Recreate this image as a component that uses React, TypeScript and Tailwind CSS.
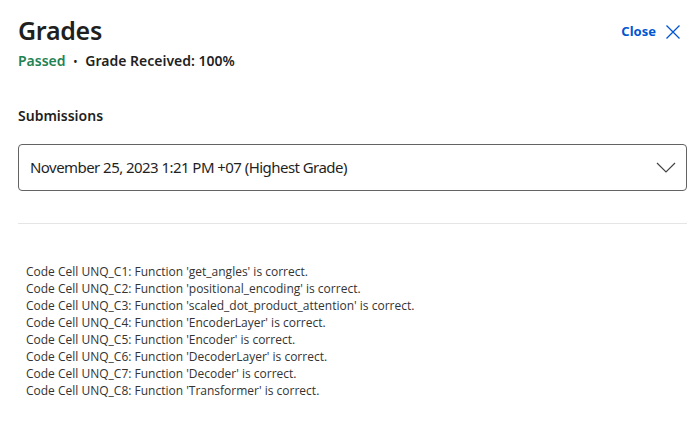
import { ChangeEvent, useState } from 'react'

const results = [
  "Code Cell UNQ_C1: Function 'get_angles' is correct.",
  "Code Cell UNQ_C2: Function 'positional_encoding' is correct.",
  "Code Cell UNQ_C3: Function 'scaled_dot_product_attention' is correct.",
  "Code Cell UNQ_C4: Function 'EncoderLayer' is correct.",
  "Code Cell UNQ_C5: Function 'Encoder' is correct.",
  "Code Cell UNQ_C6: Function 'DecoderLayer' is correct.",
  "Code Cell UNQ_C7: Function 'Decoder' is correct.",
  "Code Cell UNQ_C8: Function 'Transformer' is correct."
]

const heading = { fontFamily: '"Noto Sans", "Open Sans", sans-serif' }

export default function App() {
  const [submission, setSubmission] = useState('latest')

  return (
    <div className="w-[697px] h-[448px] bg-white text-[#1f1f1f] pl-[18px] pr-[10px] pt-[14px]" style={heading}>
      <header className="flex items-start justify-between">
        <div>
          <h1 className="text-[25px] font-semibold leading-[32px] tracking-[-0.3px]">Grades</h1>
          <div className="flex items-center mt-[5px] text-[14px] font-semibold leading-[20px]">
            <span className="text-[#1f8354]">Passed</span>
            <span className="mx-[8px] text-[10px]">•</span>
            <span>Grade Received: 100%</span>
          </div>
        </div>
        <button className="flex items-center gap-[9px] mt-[8px] mr-[6px] text-[13px] font-bold text-[#0056d2]">
          Close
          <svg width="16" height="16" viewBox="0 0 16 16" fill="none" stroke="#0056d2" strokeWidth="1.3">
            <path d="M1.5 1.5 L14.5 14.5 M14.5 1.5 L1.5 14.5" />
          </svg>
        </button>
      </header>

      <h2 className="mt-[35px] text-[14px] font-semibold leading-[20px]">Submissions</h2>

      <div className="relative mt-[18px]">
        <select
          value={submission}
          onChange={(e: ChangeEvent<HTMLSelectElement>) => setSubmission(e.target.value)}
          className="appearance-none block w-full h-[47px] rounded-[4px] border border-[#636363] bg-white pl-[11px] pr-10 text-[15px] text-[#1f1f1f] tracking-[-0.55px] outline-none"
        >
          <option value="latest">November 25, 2023 1:21 PM +07 (Highest Grade)</option>
        </select>
        <svg className="pointer-events-none absolute right-[11px] top-[18px]" width="20" height="11" viewBox="0 0 20 11" fill="none" stroke="#444" strokeWidth="1.2">
          <path d="M1 1 L10 10 L19 1" />
        </svg>
      </div>

      <hr className="mt-[32px] border-t border-[#e5e5e5]" />

      <div className="mt-[39px] pl-[8px] text-[12px] leading-[17px] text-[#333]" style={{ fontFamily: '"Open Sans", sans-serif' }}>
        {results.map((line) => (
          <div key={line}>{line}</div>
        ))}
      </div>
    </div>
  )
}
